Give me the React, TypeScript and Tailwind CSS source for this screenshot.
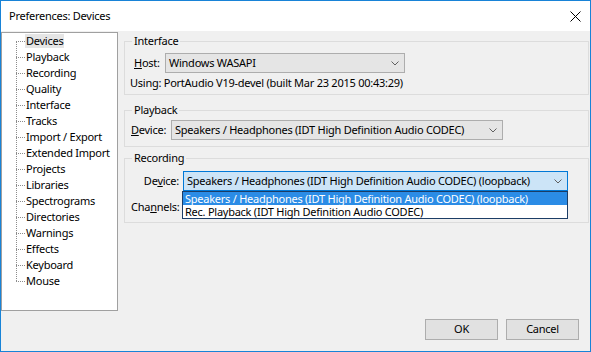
import { useState } from 'react';

const pages = [
  'Devices',
  'Playback',
  'Recording',
  'Quality',
  'Interface',
  'Tracks',
  'Import / Export',
  'Extended Import',
  'Projects',
  'Libraries',
  'Spectrograms',
  'Directories',
  'Warnings',
  'Effects',
  'Keyboard',
  'Mouse',
];

const font = { fontFamily: '"Noto Sans", "Open Sans", sans-serif' };

function Chevron() {
  return (
    <svg width="8" height="5" viewBox="0 0 8 5" className="shrink-0">
      <path d="M0.5 0.5 L4 4 L7.5 0.5" fill="none" stroke="#606060" strokeWidth="1" />
    </svg>
  );
}

function Combo({ value, width, active }: { value: string; width: number; active?: boolean }) {
  return (
    <div
      className={
        'flex h-[20px] items-center justify-between border pl-[3px] pr-[5px] shrink-0 ' +
        (active ? 'border-[#0078d7] bg-[#cce4f7]' : 'border-[#adadad] bg-[#e5e5e5]')
      }
      style={{ width }}
    >
      <span className="whitespace-nowrap">{value}</span>
      <Chevron />
    </div>
  );
}

function Group({ label, children, className }: { label: string; children: React.ReactNode; className?: string }) {
  return (
    <fieldset className={'border border-[#dcdcdc] px-[5px] ' + (className ?? '')}>
      <legend className="ml-[2px] px-[2px] leading-[16px]">{label}</legend>
      {children}
    </fieldset>
  );
}

function U({ children }: { children: React.ReactNode }) {
  return <span className="underline underline-offset-[1px]">{children}</span>;
}

export default function App() {
  const [selected, setSelected] = useState('Devices');

  return (
    <div
      className="w-[591px] h-[352px] bg-[#f0f0f0] border border-[#1883d7] flex flex-col text-[11px] tracking-[-0.25px] text-black"
      style={font}
    >
      {/* title bar */}
      <div className="h-[30px] bg-white flex items-center justify-between pl-[8px] pr-[9px] shrink-0">
        <span>Preferences: Devices</span>
        <svg width="11" height="11" viewBox="0 0 11 11">
          <path d="M0.5 0.5 L10.5 10.5 M10.5 0.5 L0.5 10.5" stroke="#000" strokeWidth="1" />
        </svg>
      </div>

      <div className="flex flex-1">
        {/* page tree */}
        <div className="mt-[1px] w-[117px] h-[279px] bg-white border border-[#a0a0a0] relative shrink-0">
          <div className="absolute left-[14px] top-[8px] h-[240px] border-l border-dotted border-[#8c8c8c]" />
          <ul>
            {pages.map((p) => (
              <li key={p} className="h-[16px] flex items-center pl-[14px]" onClick={() => setSelected(p)}>
                <span className="w-[9px] border-t border-dotted border-[#8c8c8c]" />
                <span className={'px-[1px] leading-[14px] whitespace-nowrap ' + (selected === p ? 'bg-[#e5e5e5]' : '')}>
                  {p}
                </span>
              </li>
            ))}
          </ul>
        </div>

        {/* settings */}
        <div className="flex flex-col flex-1 ml-[6px] mr-[1px] pt-[2px]">
          <Group label="Interface" className="h-[62px]">
            <div className="flex items-center mt-[4px] pl-[4px]">
              <span className="w-[31px]">
                <U>H</U>ost:
              </span>
              <Combo value="Windows WASAPI" width={240} />
            </div>
            <div className="mt-[2px] leading-[16px] whitespace-nowrap">Using: PortAudio V19-devel (built Mar 23 2015 00:43:29)</div>
          </Group>

          <Group label="Playback" className="h-[45px] mt-[7px]">
            <div className="flex items-center mt-[2px] pl-[1px]">
              <span className="w-[40px]">
                <U>D</U>evice:
              </span>
              <Combo value="Speakers / Headphones (IDT High Definition Audio CODEC)" width={332} />
            </div>
          </Group>

          <Group label="Recording" className="h-[73px] mt-[3px]">
            <div className="relative pt-[5px]">
              <div className="flex items-center">
                <span className="w-[53px] text-right pr-[4px]">
                  De<U>v</U>ice:
                </span>
                <Combo value="Speakers / Headphones (IDT High Definition Audio CODEC) (loopback)" width={385} active />
              </div>
              <div className="flex items-center mt-[6px] pl-[1px] h-[20px]">
                <span>
                  Cha<U>n</U>nels:
                </span>
              </div>
              {/* open dropdown list */}
              <div className="absolute left-[52px] top-[25px] w-[386px] border border-[#1c3d66] bg-white">
                <div className="h-[13px] leading-[13px] bg-[#2b8ce6] text-white pl-[2px] whitespace-nowrap">
                  Speakers / Headphones (IDT High Definition Audio CODEC) (loopback)
                </div>
                <div className="h-[13px] leading-[13px] pl-[2px] whitespace-nowrap">Rec. Playback (IDT High Definition Audio CODEC)</div>
              </div>
            </div>
          </Group>

          <div className="flex-1" />
          <div className="flex justify-end gap-[8px] pr-[10px] pb-[11px]">
            <button className="w-[73px] h-[21px] bg-[#e1e1e1] border border-[#adadad]">OK</button>
            <button className="w-[73px] h-[21px] bg-[#e1e1e1] border border-[#adadad]">Cancel</button>
          </div>
        </div>
      </div>
    </div>
  );
}
